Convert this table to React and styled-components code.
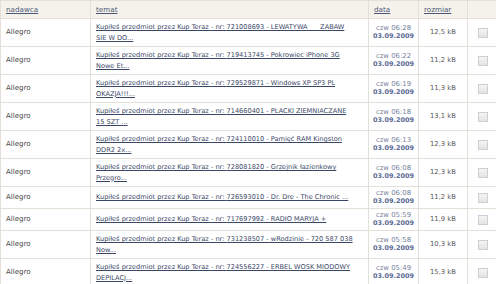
import React from 'react';
import styled, { createGlobalStyle } from 'styled-components';

const GlobalStyle = createGlobalStyle`
    html, body {
        margin: 0;
        padding: 0;
        background: #ffffff;
        overflow: hidden;
    }
    body {
        font-family: "DejaVu Sans", Verdana, sans-serif;
    }
`;

const Table = styled.table`
    width: 497px;
    border-collapse: collapse;
    table-layout: fixed;
    font-size: 6.6px;
    color: #4a4a4a;
`;

const HeadCell = styled.th`
    height: 17px;
    padding: 0 0 0 5px;
    background-color: #f4f2eb;
    border: 1px solid #e3e0d7;
    text-align: left;
    font-weight: normal;
    vertical-align: middle;
`;

const HeadLink = styled.a`
    color: #4d5877;
    text-decoration: underline;
    font-size: 7.2px;
`;

const Row = styled.tr`
    height: ${props => props.single ? 22 : 28}px;
`;

const Cell = styled.td`
    padding: 3px ${props => props.padX ?? 5}px;
    border: 1px solid #e3e0d7;
    vertical-align: middle;
    text-align: ${props => props.align || 'left'};
    line-height: 10.5px;
`;

const Sender = styled.span`
    font-size: 7px;
    color: #484848;
`;

const TopicLink = styled.a`
    color: #3b4768;
    text-decoration: underline;
    white-space: pre;
`;

const DateBox = styled.div`
    line-height: 7.5px;
    font-size: 6.5px;
    text-align: center;
`;

const Time = styled.div`
    color: #77829c;
    font-size: 6.9px;
`;

const Day = styled.div`
    color: #5b6b93;
    font-weight: bold;
`;

const Size = styled.span`
    color: #5a5a5a;
    font-size: 6.8px;
`;

const Check = styled.input`
    appearance: none;
    width: 10px;
    height: 10px;
    border: 1px solid #cfcfcf;
    background: linear-gradient(#f4f4f4, #e4e4e4);
    box-sizing: border-box;
    display: block;
    margin: 0 auto;
`;

const mails = [
    { nr: '721008693 - LEWATYWA      ZABAW', rest: 'SIE W DO...', time: '06:28', size: '12,5 kB' },
    { nr: '719413745 - Pokrowiec iPhone 3G', rest: 'Nowe Et...', time: '06:22', size: '11,2 kB' },
    { nr: '729529871 - Windows XP SP3 PL', rest: 'OKAZJA!!!...', time: '06:19', size: '11,3 kB' },
    { nr: '714660401 - PLACKI ZIEMNIACZANE', rest: '15 SZT ...', time: '06:18', size: '13,1 kB' },
    { nr: '724110010 - Pamięć RAM Kingston', rest: 'DDR2 2x...', time: '06:13', size: '12,3 kB' },
    { nr: '728081820 - Grzejnik łazienkowy', rest: 'Przegro...', time: '06:08', size: '12,3 kB' },
    { nr: '726593010 - Dr. Dre - The Chronic ...', rest: null, time: '06:08', size: '11,2 kB' },
    { nr: '717697992 - RADIO MARYJA +', rest: null, time: '05:59', size: '11,9 kB' },
    { nr: '731238507 - wRodzinie - 720 587 038', rest: 'Now...', time: '05:58', size: '10,3 kB' },
    { nr: '724556227 - ERBEL WOSK MIODOWY', rest: 'DEPILACJ...', time: '05:49', size: '15,3 kB' },
];

export default function App() {
    return (
        <React.Fragment>
            <GlobalStyle />
            <Table>
                <colgroup>
                    <col style={{ width: 90 }} />
                    <col style={{ width: 278 }} />
                    <col style={{ width: 50 }} />
                    <col style={{ width: 49 }} />
                    <col style={{ width: 30 }} />
                </colgroup>
                <thead>
                    <tr>
                        <HeadCell><HeadLink href="#">nadawca</HeadLink></HeadCell>
                        <HeadCell><HeadLink href="#">temat</HeadLink></HeadCell>
                        <HeadCell><HeadLink href="#">data</HeadLink></HeadCell>
                        <HeadCell><HeadLink href="#">rozmiar</HeadLink></HeadCell>
                        <HeadCell></HeadCell>
                    </tr>
                </thead>
                <tbody>
                    {mails.map((m, i) => (
                        <Row key={i} single={!m.rest}>
                            <Cell><Sender>Allegro</Sender></Cell>
                            <Cell>
                                <TopicLink href="#">
                                    Kupiłeś przedmiot przez Kup Teraz - nr: {m.nr}
                                    {m.rest && <br />}
                                    {m.rest}
                                </TopicLink>
                            </Cell>
                            <Cell padX={2}>
                                <DateBox>
                                    <Time>czw {m.time}</Time>
                                    <Day>03.09.2009</Day>
                                </DateBox>
                            </Cell>
                            <Cell align="center"><Size>{m.size}</Size></Cell>
                            <Cell padX={0}><Check type="checkbox" /></Cell>
                        </Row>
                    ))}
                </tbody>
            </Table>
        </React.Fragment>
    );
}
